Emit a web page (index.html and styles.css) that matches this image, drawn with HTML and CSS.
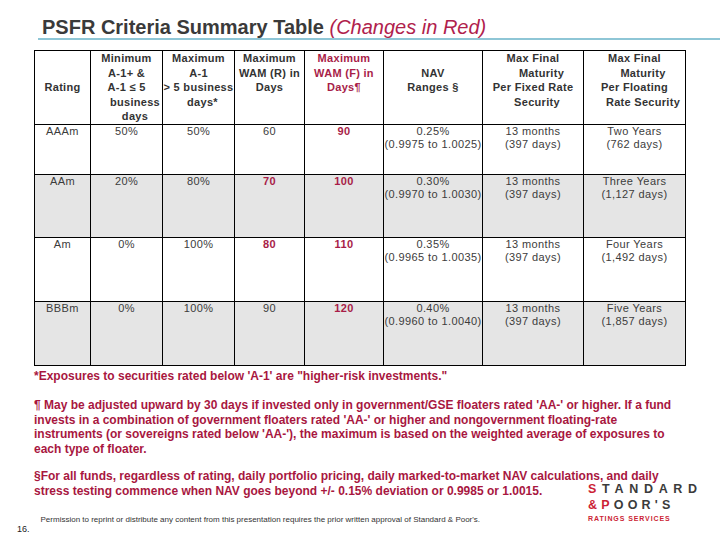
FILE: index.html
```html
<!DOCTYPE html>
<html lang="en">
<head>
<meta charset="utf-8">
<title>PSFR Criteria Summary Table</title>
<link rel="stylesheet" href="styles.css">
</head>
<body>
<div class="slide">
  <header class="title-bar">
    <h1 class="title">PSFR Criteria Summary Table <em class="title-red">(Changes in Red)</em></h1>
  </header>

  <table class="criteria">
    <colgroup>
      <col class="c1"><col class="c2"><col class="c3"><col class="c4"><col class="c5"><col class="c6"><col class="c7"><col class="c8">
    </colgroup>
    <thead>
      <tr class="head-row">
        <th class="pad2">Rating</th>
        <th>Minimum<br>A-1+ &amp;<br>A-1 ≤ 5<br><span class="indent">business</span><br><span class="indent">days</span></th>
        <th>Maximum<br>A-1<br><span class="wide">&gt; 5 business</span><br><span class="indent-s">days*</span></th>
        <th>Maximum<br>WAM (R) in<br>Days</th>
        <th class="red">Maximum<br>WAM (F) in<br>Days¶</th>
        <th class="pad1">NAV<br>Ranges §</th>
        <th>Max Final<br><span class="indent">Maturity</span><br>Per Fixed Rate<br><span class="indent-s">Security</span></th>
        <th>Max Final<br><span class="indent">Maturity</span><br>Per Floating<br><span class="indent">Rate Security</span></th>
      </tr>
    </thead>
    <tbody>
      <tr class="row-a">
        <td>AAAm</td><td>50%</td><td>50%</td><td>60</td><td class="red">90</td>
        <td>0.25%<br>(0.9975 to 1.0025)</td><td>13 months<br>(397 days)</td><td>Two Years<br>(762 days)</td>
      </tr>
      <tr class="row-b1 shaded">
        <td>AAm</td><td>20%</td><td>80%</td><td class="red">70</td><td class="red">100</td>
        <td>0.30%<br>(0.9970 to 1.0030)</td><td>13 months<br>(397 days)</td><td>Three Years<br>(1,127 days)</td>
      </tr>
      <tr class="row-b">
        <td>Am</td><td>0%</td><td>100%</td><td class="red">80</td><td class="red">110</td>
        <td>0.35%<br>(0.9965 to 1.0035)</td><td>13 months<br>(397 days)</td><td>Four Years<br>(1,492 days)</td>
      </tr>
      <tr class="row-b shaded">
        <td>BBBm</td><td>0%</td><td>100%</td><td>90</td><td class="red">120</td>
        <td>0.40%<br>(0.9960 to 1.0040)</td><td>13 months<br>(397 days)</td><td>Five Years<br>(1,857 days)</td>
      </tr>
    </tbody>
  </table>

  <section class="notes">
    <p class="note note-star">*Exposures to securities rated below 'A-1' are "higher-risk investments."</p>
    <p class="note note-para">¶ May be adjusted upward by 30 days if invested only in government/GSE floaters rated 'AA-' or higher. If a fund<br>invests in a combination of government floaters rated 'AA-' or higher and nongovernment floating-rate<br>instruments (or sovereigns rated below 'AA-'), the maximum is based on the weighted average of exposures to<br>each type of floater.</p>
    <p class="note note-sect">§For all funds, regardless of rating, daily portfolio pricing, daily marked-to-market NAV calculations, and daily<br>stress testing commence when NAV goes beyond +/- 0.15% deviation or 0.9985 or 1.0015.</p>
  </section>

  <footer class="footer">
    <span class="page-num">16.</span>
    <p class="permission">Permission to reprint or distribute any content from this presentation requires the prior written approval of Standard &amp; Poor's.</p>
  </footer>

  <div class="logo">
    <div class="logo-line1"><span class="logo-red">S</span>TANDARD</div>
    <div class="logo-line2"><span class="logo-red">&amp;P</span>OOR'S</div>
    <div class="logo-line3">RATINGS SERVICES</div>
  </div>
</div>
</body>
</html>
```

FILE: styles.css
```css
* { box-sizing: border-box; }

html, body {
  margin: 0;
  padding: 0;
  background: #ffffff;
}

body {
  font-family: "Liberation Sans", Arial, sans-serif;
  color: #333333;
}

.slide {
  position: relative;
  width: 720px;
  height: 540px;
  overflow: hidden;
  background: #ffffff;
}

/* Title */
.title-bar {
  margin-left: 38px;
  padding: 16px 0 0 4px;
  border-bottom: 2px solid #8ec6d6;
}

.title {
  margin: 0;
  font-size: 20px;
  line-height: 22px;
  font-weight: bold;
  color: #3a3a3a;
  white-space: nowrap;
}

.title-red {
  font-weight: normal;
  font-style: italic;
  color: #b0214c;
}

/* Table */
.criteria {
  margin: 10px 0 0 34px;
  width: 651px;
  table-layout: fixed;
  border-collapse: collapse;
  font-size: 11px;
  letter-spacing: 0.4px;
  color: #3c3c3c;
}

.c1 { width: 56px; }
.c2 { width: 72px; }
.c3 { width: 72px; }
.c4 { width: 70px; }
.c5 { width: 79px; }
.c6 { width: 99px; }
.c7 { width: 101px; }
.c8 { width: 102px; }

.criteria th,
.criteria td {
  border: 1px solid #000000;
  padding: 0;
  text-align: center;
  vertical-align: top;
  white-space: nowrap;
  overflow: visible;
}

.criteria th {
  font-weight: bold;
  line-height: 14.5px;
  letter-spacing: 0.3px;
  color: #333333;
}

.criteria td {
  line-height: 13.5px;
}

.head-row { height: 72px; }
.row-a { height: 50px; }
.row-b1 { height: 63px; }
.row-b { height: 64px; }

.shaded td { background: #e5e5e5; }

.criteria .red {
  color: #a81d48;
  font-weight: bold;
}

.criteria .pad2 { padding-top: 29px; }
.criteria .pad1 { padding-top: 14.5px; }

.indent { padding-left: 17px; }
.indent-s { padding-left: 8px; }
.wide { margin-left: -2px; margin-right: -2px; }

/* Notes */
.notes {
  padding-left: 34px;
  color: #a8173f;
  font-weight: bold;
  font-size: 12px;
  line-height: 14.5px;
  white-space: nowrap;
}

.note { margin: 0; }
.note-star { margin-top: 3px; }
.note-para { margin-top: 15px; }
.note-sect { margin-top: 13px; }

/* Footer */
.footer {
  display: flex;
  align-items: flex-start;
  margin-top: 17px;
  padding-left: 17px;
}

.page-num {
  font-size: 9px;
  line-height: 10px;
  margin-top: 9px;
  color: #222222;
}

.permission {
  margin: 0 0 0 11px;
  font-size: 8px;
  line-height: 10px;
  color: #333333;
  white-space: nowrap;
}

/* Logo */
.logo {
  position: absolute;
  left: 588px;
  top: 484px;
  font-family: "Liberation Sans", Arial, sans-serif;
  font-weight: bold;
  color: #3b3b3b;
}

.logo-line1,
.logo-line2 {
  font-size: 12.5px;
  line-height: 11px;
  white-space: nowrap;
}

.logo-line1 { letter-spacing: 5.7px; }
.logo-line2 { letter-spacing: 4.2px; margin-top: 5px; }

.logo-red { color: #cc1f36; }

.logo-line3 {
  margin-top: 4px;
  font-size: 7px;
  line-height: 8px;
  letter-spacing: 0.9px;
  color: #cc1f36;
  white-space: nowrap;
}
```
